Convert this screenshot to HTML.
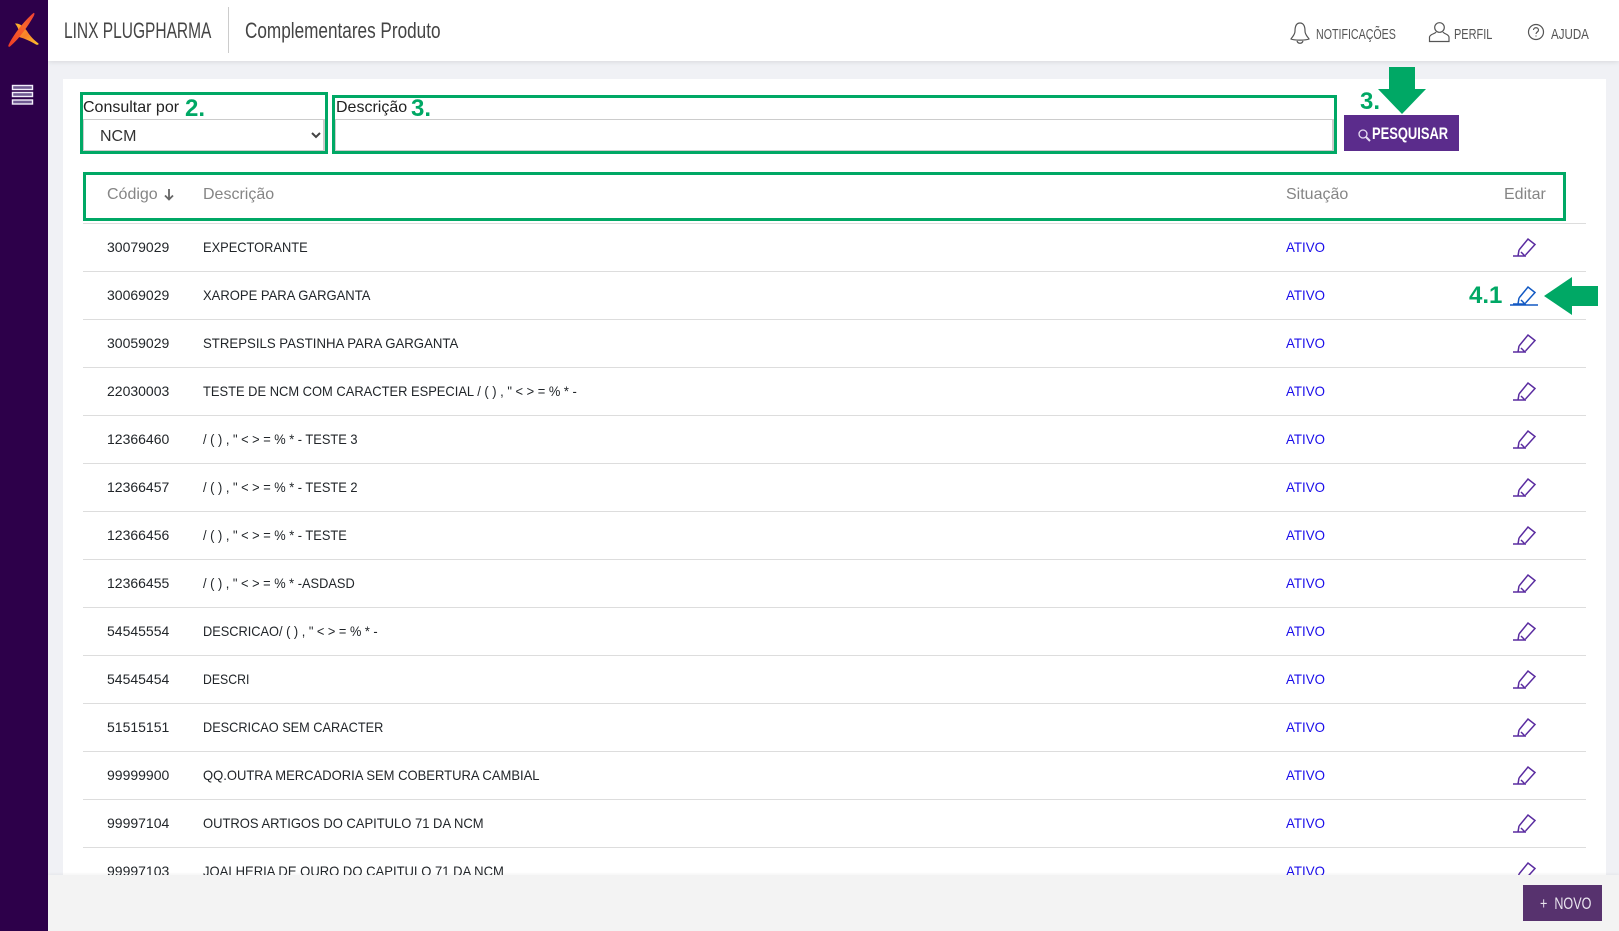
<!DOCTYPE html>
<html lang="pt">
<head>
<meta charset="utf-8">
<title>Complementares Produto</title>
<style>
html,body{margin:0;padding:0;width:1619px;height:931px;overflow:hidden;background:#f0f1f5;font-family:"Liberation Sans",sans-serif;}
.a{position:absolute;white-space:nowrap;}
#side{left:0;top:0;width:48px;height:931px;background:#2d004a;}
#top{left:48px;top:0;width:1571px;height:61px;background:#fff;box-shadow:0 1px 5px rgba(0,0,0,.1);}
#card{left:63px;top:79px;width:1543px;height:800px;background:#fff;}
.n{color:#444;transform-origin:0 50%;}
.g{border:3px solid #00a865;box-sizing:border-box;}
.num{font-weight:bold;color:#00a865;font-size:24px;line-height:24px;}
.row{left:83px;width:1503px;height:48px;border-bottom:1px solid #ddd;box-sizing:border-box;}
.t{font-size:14px;line-height:20px;color:#212529;transform-origin:0 50%;}
.st{color:#1a0dea;transform:scaleX(.95);}
#clip{left:0;top:0;width:1619px;height:875px;overflow:hidden;}
.field{background:#fff;border:1px solid #ccc;border-bottom:2px solid #ccc;border-right:2px solid #ccc;box-sizing:border-box;}
.h{font-size:16px;line-height:22px;color:#858585;}
#foot{left:48px;top:875px;width:1571px;height:56px;background:#f3f3f3;box-shadow:0 -1px 3px rgba(0,0,0,.05);}
</style>
</head>
<body>
<div class="a" id="card"></div>

<div class="a" id="clip">
  <div class="a row" style="top:224px"></div>
  <div class="a row" style="top:272px"></div>
  <div class="a row" style="top:320px"></div>
  <div class="a row" style="top:368px"></div>
  <div class="a row" style="top:416px"></div>
  <div class="a row" style="top:464px"></div>
  <div class="a row" style="top:512px"></div>
  <div class="a row" style="top:560px"></div>
  <div class="a row" style="top:608px"></div>
  <div class="a row" style="top:656px"></div>
  <div class="a row" style="top:704px"></div>
  <div class="a row" style="top:752px"></div>
  <div class="a row" style="top:800px"></div>
  <div class="a" style="left:83px;top:223px;width:1503px;height:1px;background:#ddd"></div>

  <div class="a t" style="left:107px;top:237px">30079029</div><div class="a t" style="left:203px;top:237px;transform:scaleX(.917)">EXPECTORANTE</div><div class="a t st" style="left:1286px;top:237px">ATIVO</div>
  <div class="a t" style="left:107px;top:285px">30069029</div><div class="a t" style="left:203px;top:285px;transform:scaleX(.93)">XAROPE PARA GARGANTA</div><div class="a t st" style="left:1286px;top:285px">ATIVO</div>
  <div class="a t" style="left:107px;top:333px">30059029</div><div class="a t" style="left:203px;top:333px;transform:scaleX(.943)">STREPSILS PASTINHA PARA GARGANTA</div><div class="a t st" style="left:1286px;top:333px">ATIVO</div>
  <div class="a t" style="left:107px;top:381px">22030003</div><div class="a t" style="left:203px;top:381px;transform:scaleX(.922)">TESTE DE NCM COM CARACTER ESPECIAL / ( ) , " &lt; &gt; = % * -</div><div class="a t st" style="left:1286px;top:381px">ATIVO</div>
  <div class="a t" style="left:107px;top:429px">12366460</div><div class="a t" style="left:203px;top:429px;transform:scaleX(.917)">/ ( ) , " &lt; &gt; = % * - TESTE 3</div><div class="a t st" style="left:1286px;top:429px">ATIVO</div>
  <div class="a t" style="left:107px;top:477px">12366457</div><div class="a t" style="left:203px;top:477px;transform:scaleX(.917)">/ ( ) , " &lt; &gt; = % * - TESTE 2</div><div class="a t st" style="left:1286px;top:477px">ATIVO</div>
  <div class="a t" style="left:107px;top:525px">12366456</div><div class="a t" style="left:203px;top:525px;transform:scaleX(.917)">/ ( ) , " &lt; &gt; = % * - TESTE</div><div class="a t st" style="left:1286px;top:525px">ATIVO</div>
  <div class="a t" style="left:107px;top:573px">12366455</div><div class="a t" style="left:203px;top:573px;transform:scaleX(.916)">/ ( ) , " &lt; &gt; = % * -ASDASD</div><div class="a t st" style="left:1286px;top:573px">ATIVO</div>
  <div class="a t" style="left:107px;top:621px">54545554</div><div class="a t" style="left:203px;top:621px;transform:scaleX(.913)">DESCRICAO/ ( ) , " &lt; &gt; = % * -</div><div class="a t st" style="left:1286px;top:621px">ATIVO</div>
  <div class="a t" style="left:107px;top:669px">54545454</div><div class="a t" style="left:203px;top:669px;transform:scaleX(.877)">DESCRI</div><div class="a t st" style="left:1286px;top:669px">ATIVO</div>
  <div class="a t" style="left:107px;top:717px">51515151</div><div class="a t" style="left:203px;top:717px;transform:scaleX(.909)">DESCRICAO SEM CARACTER</div><div class="a t st" style="left:1286px;top:717px">ATIVO</div>
  <div class="a t" style="left:107px;top:765px">99999900</div><div class="a t" style="left:203px;top:765px;transform:scaleX(.929)">QQ.OUTRA MERCADORIA SEM COBERTURA CAMBIAL</div><div class="a t st" style="left:1286px;top:765px">ATIVO</div>
  <div class="a t" style="left:107px;top:813px">99997104</div><div class="a t" style="left:203px;top:813px;transform:scaleX(.928)">OUTROS ARTIGOS DO CAPITULO 71 DA NCM</div><div class="a t st" style="left:1286px;top:813px">ATIVO</div>
  <div class="a t" style="left:107px;top:861px">99997103</div><div class="a t" style="left:203px;top:861px;transform:scaleX(.932)">JOALHERIA DE OURO DO CAPITULO 71 DA NCM</div><div class="a t st" style="left:1286px;top:861px">ATIVO</div>

  <svg class="a" style="left:1505px;top:224px" width="40" height="651" viewBox="0 0 40 651" fill="none" stroke="#5a2ca0" stroke-width="1.500">
    <defs><g id="p"><path d="M14 26 L23 15 L30 20.500 L20.500 31 M14 26 L13 32 M16 28 L20 32 M8 32 L21 32"/></g></defs>
    <use href="#p" y="0"/>
    <g stroke="#1259c3"><use href="#p" y="48"/><path d="M5 81 H33"/></g>
    <use href="#p" y="96"/><use href="#p" y="144"/><use href="#p" y="192"/><use href="#p" y="240"/>
    <use href="#p" y="288"/><use href="#p" y="336"/><use href="#p" y="384"/><use href="#p" y="432"/>
    <use href="#p" y="480"/><use href="#p" y="528"/><use href="#p" y="576"/><use href="#p" y="624"/>
  </svg>
</div>

<div class="a" id="top"></div>
<div class="a" id="side"></div>

<svg class="a" style="left:6px;top:10px" width="36" height="40" viewBox="0 0 36 40">
  <defs>
    <linearGradient id="lr" x1="0" y1="1" x2="1" y2="0"><stop offset="0" stop-color="#ee3a26"/><stop offset=".6" stop-color="#f8662a"/><stop offset="1" stop-color="#ee3f34"/></linearGradient>
    <linearGradient id="ly" x1="0" y1="0" x2="1" y2="1"><stop offset="0" stop-color="#fdb92c"/><stop offset=".5" stop-color="#f7802a"/><stop offset="1" stop-color="#fdc42c"/></linearGradient>
  </defs>
  <path fill="url(#ly)" d="M9 13.500 C14 13 18 17 21 21 C24 26 28 30 32.500 33.500 C33 35 31 35 30 34.500 C24 31 20 29 13 27 C14 22 12 17 9 13.500 Z"/>
  <path fill="url(#lr)" d="M27.500 3 C29 2.500 28.500 5 27.500 6.500 C22 16 14 28 4 36.500 C2 37.500 2 35.500 3 34 C8 24 18 11 27.500 3 Z"/>
</svg>

<svg class="a" style="left:11px;top:84px" width="23" height="22" viewBox="0 0 23 22" fill="#6f5a92" stroke="#f2eefa" stroke-width="1.400">
  <rect x="1.500" y="1.500" width="20" height="4"/><rect x="1.500" y="8.500" width="20" height="4"/><rect x="1.500" y="16" width="20" height="4"/>
</svg>

<div class="a n" style="left:64px;top:17px;font-size:22px;line-height:28px;transform:scaleX(.705)">LINX PLUGPHARMA</div>
<div class="a" style="left:228px;top:7px;width:1px;height:46px;background:#ccc"></div>
<div class="a n" style="left:245px;top:17px;font-size:22px;line-height:28px;transform:scaleX(.78)">Complementares Produto</div>

<svg class="a" style="left:1289px;top:21px" width="22" height="24" viewBox="0 0 22 24" fill="none" stroke="#555" stroke-width="1.200">
  <path d="M11 2 C7 2 6 6 6 10 C6 14 3 16 2 18 C5 19.500 17 19.500 20 18 C19 16 16 14 16 10 C16 6 15 2 11 2 Z M8 20 C9 23 13 23 14 20"/>
</svg>
<div class="a n" style="left:1316px;top:26px;font-size:15px;line-height:18px;color:#555;transform:scaleX(.71)">NOTIFICAÇÕES</div>
<svg class="a" style="left:1428px;top:21px" width="23" height="23" viewBox="0 0 23 23" fill="none" stroke="#555" stroke-width="1.200">
  <circle cx="11.500" cy="6.500" r="4.800"/><path d="M8 11 C7 13 2 13 1.500 16 V20.500 H21 V16 C20.500 13 16 13 15 11"/>
</svg>
<div class="a n" style="left:1454px;top:26px;font-size:15px;line-height:18px;color:#555;transform:scaleX(.73)">PERFIL</div>
<svg class="a" style="left:1527px;top:23px" width="18" height="18" viewBox="0 0 18 18" fill="none" stroke="#555" stroke-width="1.200">
  <circle cx="9" cy="9" r="7.500"/><path d="M6.500 7 C6.500 4 11.500 4 11.500 7 C11.500 9 9 9 9 11"/><path d="M9 12.500 V13.500"/>
</svg>
<div class="a n" style="left:1551px;top:26px;font-size:15px;line-height:18px;color:#555;transform:scaleX(.77)">AJUDA</div>

<div class="a field" style="left:83px;top:119px;width:242px;height:33px"></div>
<div class="a" style="left:83px;top:98px;font-size:16px;line-height:20px;color:#222">Consultar por</div>
<div class="a" style="left:100px;top:127px;font-size:16px;line-height:20px;color:#333">NCM</div>
<svg class="a" style="left:310px;top:131px" width="12" height="9" viewBox="0 0 12 9" fill="none" stroke="#444" stroke-width="2"><path d="M2 2 L6 6 L10 2"/></svg>
<div class="a g" style="left:80px;top:92px;width:248px;height:62px"></div>
<div class="a num" style="left:185px;top:97px">2.</div>

<div class="a field" style="left:335px;top:119px;width:999px;height:33px"></div>
<div class="a" style="left:336px;top:98px;font-size:16px;line-height:20px;color:#222">Descrição</div>
<div class="a g" style="left:332px;top:95px;width:1005px;height:59px"></div>
<div class="a num" style="left:411px;top:97px">3.</div>

<div class="a" style="left:1344px;top:115px;width:115px;height:36px;background:#5b2c8c"></div>
<svg class="a" style="left:1357px;top:128px" width="14" height="14" viewBox="0 0 14 14" fill="none" stroke="#e6dcf2" stroke-width="1.300"><circle cx="6" cy="6" r="4"/><path d="M9 9 L13 13" stroke-width="2"/></svg>
<div class="a n" style="left:1372px;top:124px;font-size:17px;line-height:20px;font-weight:bold;color:#fff;transform:scaleX(.76)">PESQUISAR</div>
<div class="a num" style="left:1360px;top:90px">3.</div>
<svg class="a" style="left:1376px;top:65px" width="52" height="52" viewBox="0 0 52 52"><path fill="#00a865" d="M13 2 H39 V24 H50 L26 49 L2 24 H13 Z"/></svg>

<div class="a g" style="left:83px;top:172px;width:1483px;height:49px"></div>
<div class="a h" style="left:107px;top:184px">Código</div>
<svg class="a" style="left:163px;top:188px" width="12" height="13" viewBox="0 0 12 13" fill="none" stroke="#666" stroke-width="1.800"><path d="M6 1 V11 M2 7.500 L6 11.500 L10 7.500"/></svg>
<div class="a h" style="left:203px;top:184px">Descrição</div>
<div class="a h" style="left:1286px;top:184px">Situação</div>
<div class="a h" style="left:1504px;top:184px">Editar</div>

<div class="a num" style="left:1469px;top:284px">4.1</div>
<svg class="a" style="left:1542px;top:275px" width="58" height="42" viewBox="0 0 58 42"><path fill="#00a865" d="M2 21 L30 2 V11 H56 V31 H30 V40 Z"/></svg>

<div class="a" id="foot"></div>
<div class="a" style="left:1523px;top:885px;width:79px;height:36px;background:#57326e"></div>
<div class="a n" style="left:1540px;top:894px;font-size:17px;line-height:20px;color:#e9e4ee;transform:scaleX(.74)">+&nbsp; NOVO</div>
</body>
</html>
